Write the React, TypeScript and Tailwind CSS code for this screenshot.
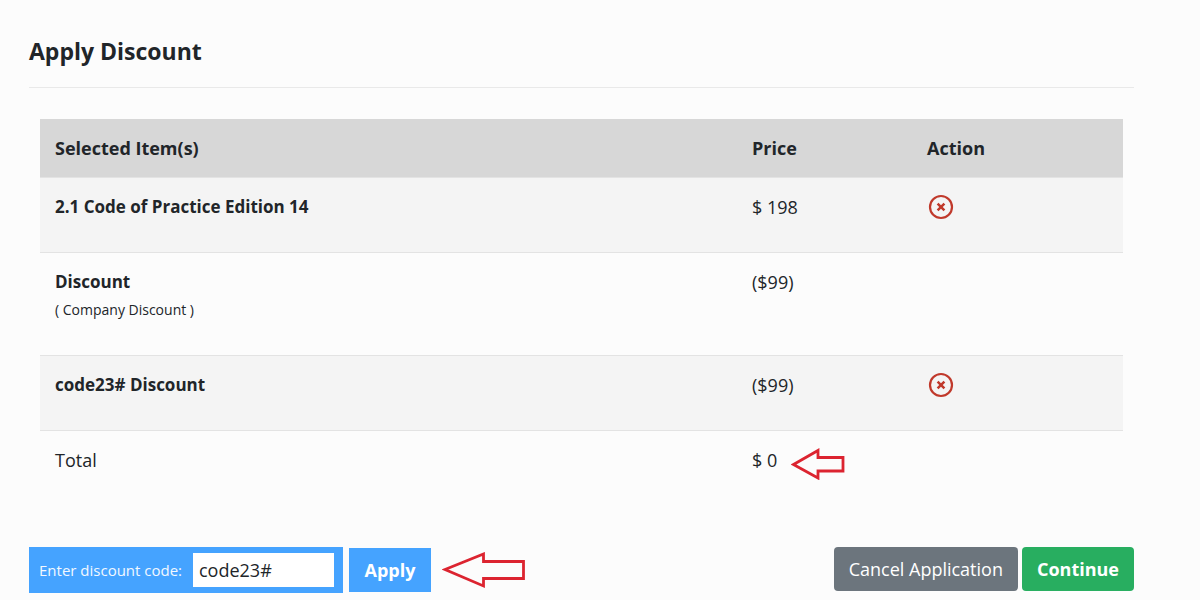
import { useState } from "react";

interface LineItem {
  name: string;
  note?: string;
  price: string;
  removable: boolean;
}

const ITEMS: LineItem[] = [
  { name: "2.1 Code of Practice Edition 14", price: "$ 198", removable: true },
  { name: "Discount", note: "( Company Discount )", price: "($99)", removable: false },
  { name: "code23# Discount", price: "($99)", removable: true },
];

function RemoveIcon() {
  return (
    <svg width="26" height="26" viewBox="0 0 26 26" fill="none" stroke="#c0392b" aria-hidden="true">
      <circle cx="13" cy="13" r="11" strokeWidth="2.2" />
      <path d="M9.6 9.6 L16.4 16.4 M16.4 9.6 L9.6 16.4" strokeWidth="2.5" />
    </svg>
  );
}

function TotalArrow() {
  return (
    <svg
      width="54"
      height="34"
      viewBox="0 0 54 34"
      fill="none"
      stroke="#dc2430"
      strokeWidth="2.8"
      aria-hidden="true"
    >
      <path d="M2.5 18.5 L27 4.5 V11.5 H52 V25 H27 V32 Z" />
    </svg>
  );
}

function ApplyArrow() {
  return (
    <svg
      width="84"
      height="37"
      viewBox="0 0 84 37"
      fill="none"
      stroke="#dc2430"
      strokeWidth="2.8"
      aria-hidden="true"
    >
      <path d="M3 17.5 L41.5 2 V9.5 H81.5 V26.5 H41.5 V34 Z" />
    </svg>
  );
}

export default function App() {
  const [code, setCode] = useState("code23#");

  return (
    <main className="min-h-screen bg-[#fcfcfc] pt-9 pr-[66px] pb-2 pl-[29px] font-['Open_Sans','Noto_Sans',sans-serif] text-lg leading-7 text-[#212529]">
      <h1 className="border-b border-[#e9e9e9] pb-[21px] text-[23px] leading-[30px] font-bold">
        Apply Discount
      </h1>

      {/* Items */}
      <div className="mt-[31px] mr-[11px] ml-[11px]">
        <table className="w-full table-fixed text-left">
          <colgroup>
            <col />
            <col className="w-[175px]" />
            <col className="w-[211px]" />
          </colgroup>
          <thead>
            <tr className="bg-[#d7d7d7]">
              <th className="px-[15px] py-[15px] font-bold">Selected Item(s)</th>
              <th className="px-[15px] py-[15px] font-bold">Price</th>
              <th className="px-[15px] py-[15px] font-bold">Action</th>
            </tr>
          </thead>
          <tbody>
            {ITEMS.map((item) => (
              <tr
                key={item.name}
                className="border-t border-[#e3e3e3] align-top odd:bg-[#f4f4f4]"
              >
                <td className="px-[15px] pt-[15px] pb-[31px]">
                  <p className="text-[17px] leading-7 font-bold">{item.name}</p>
                  {item.note && <p className="text-sm leading-7">{item.note}</p>}
                </td>
                <td className="px-[15px] pt-[15px]">{item.price}</td>
                <td className="px-4 pt-4">
                  {item.removable && (
                    <button type="button" className="block" aria-label={`Remove ${item.name}`}>
                      <RemoveIcon />
                    </button>
                  )}
                </td>
              </tr>
            ))}
            <tr className="border-t border-[#e3e3e3] align-top">
              <td className="px-[15px] py-[15px]">Total</td>
              <td className="px-[15px] py-[15px]">
                <div className="flex gap-[14px]">
                  $ 0
                  <TotalArrow />
                </div>
              </td>
              <td />
            </tr>
          </tbody>
        </table>
      </div>

      {/* Discount code and actions */}
      <div className="mt-[52px] flex items-start justify-between">
        <form className="flex items-center" onSubmit={(e) => e.preventDefault()}>
          <div className="flex h-[46px] items-center bg-[#45a3ff] pr-[9px] pl-[10px]">
            <label htmlFor="code" className="w-[154px] text-[15px] whitespace-nowrap text-[#f2f8ff]">
              Enter discount code:
            </label>
            <input
              id="code"
              value={code}
              onChange={(e) => setCode(e.target.value)}
              className="h-[34px] w-[141px] bg-white px-[6px] text-lg text-[#212529] outline-none"
            />
          </div>
          <button type="submit" className="ml-[6px] h-11 w-[82px] bg-[#45a3ff] font-bold text-white">
            Apply
          </button>
          <div className="ml-[11px]">
            <ApplyArrow />
          </div>
        </form>

        <div className="flex gap-1">
          <button type="button" className="h-11 rounded bg-[#6c757d] px-[15px] text-white">
            Cancel Application
          </button>
          <button type="button" className="h-11 rounded bg-[#28ae60] px-[15px] font-bold text-white">
            Continue
          </button>
        </div>
      </div>
    </main>
  );
}
